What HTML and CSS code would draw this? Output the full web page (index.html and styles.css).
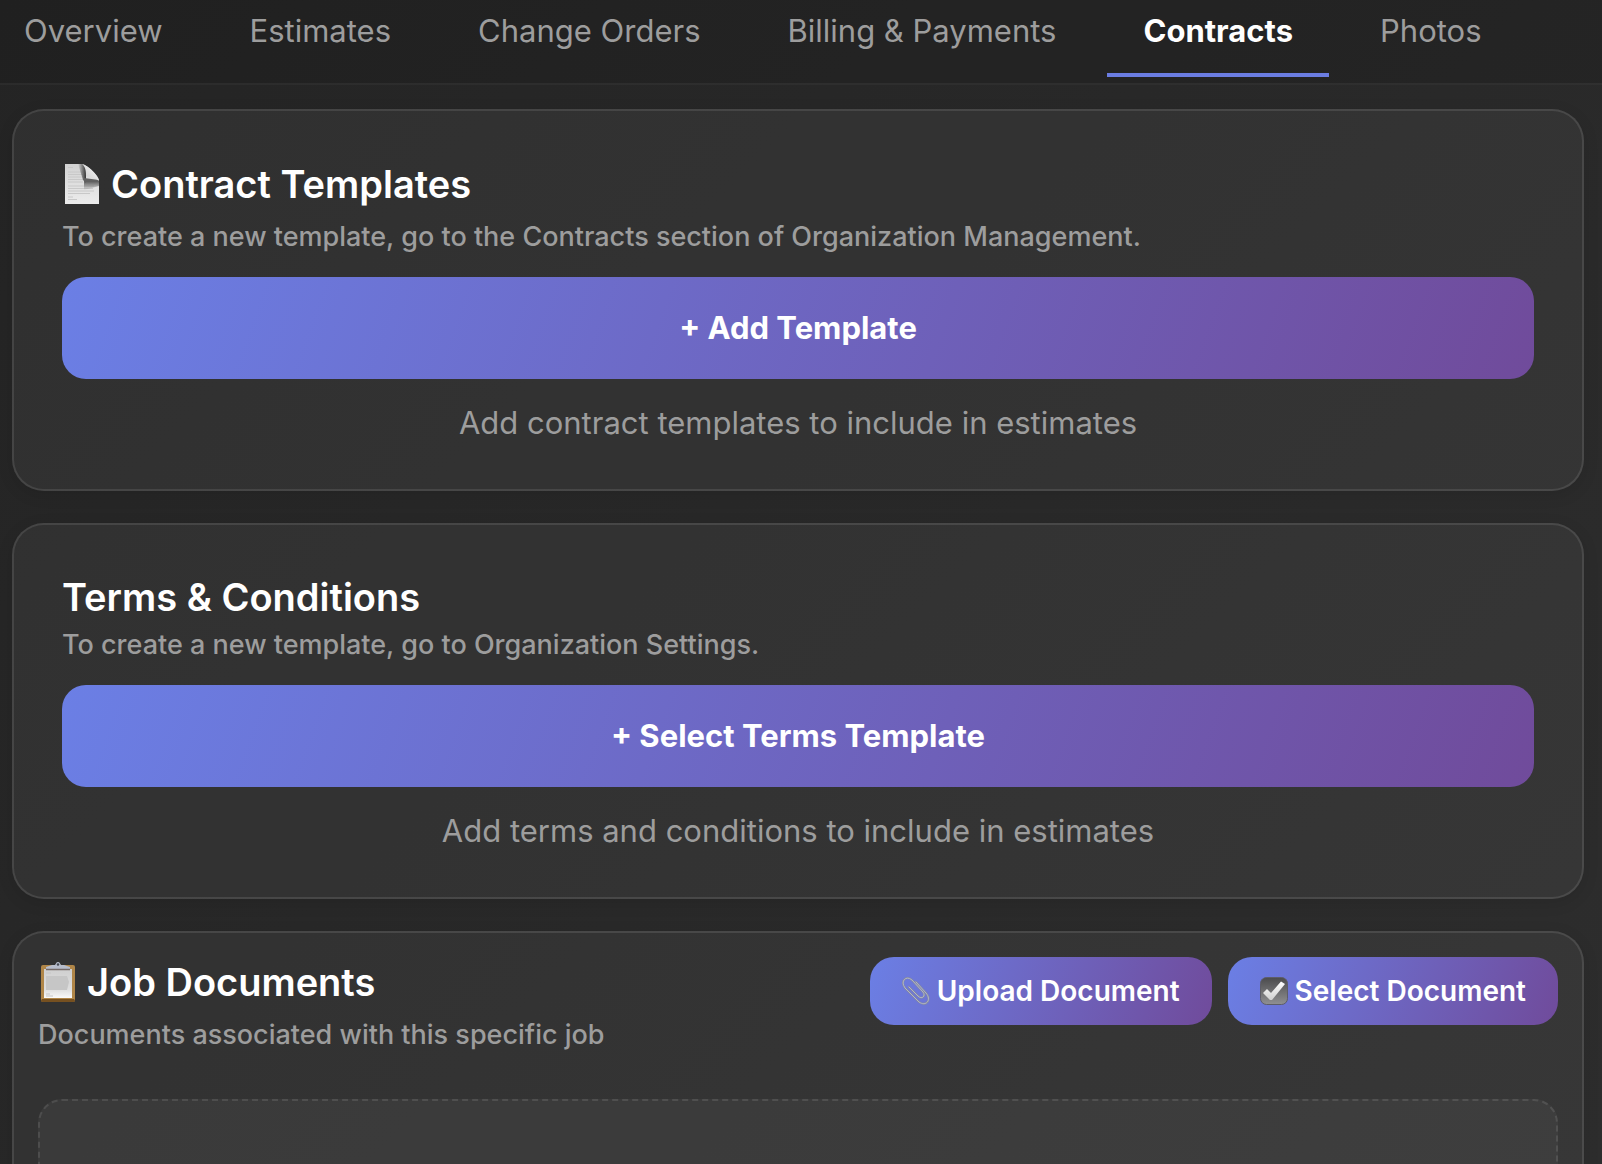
FILE: index.html
```html
<!DOCTYPE html>
<html lang="en">
<head>
<meta charset="utf-8">
<meta name="viewport" content="width=device-width, initial-scale=1">
<title>Contracts</title>
<link rel="stylesheet" href="styles.css">
</head>
<body>
<nav class="tabs" aria-label="Job sections">
  <a class="tab" href="#overview">Overview</a>
  <a class="tab" href="#estimates">Estimates</a>
  <a class="tab" href="#change-orders">Change Orders</a>
  <a class="tab" href="#billing">Billing &amp; Payments</a>
  <a class="tab tab-active" href="#contracts" aria-current="page">Contracts</a>
  <a class="tab" href="#photos">Photos</a>
</nav>
<main class="content">
  <section class="card">
    <h2 class="title title-icon">
      <svg class="icon-lg" viewBox="0 0 40 40" aria-hidden="true">
        <defs>
          <linearGradient id="sheet" x1="0" y1="0" x2="0" y2="1"><stop offset="0" stop-color="#d2d2d2"/><stop offset="1" stop-color="#ececec"/></linearGradient>
          <linearGradient id="fold" x1="1" y1="0" x2="0" y2="1"><stop offset="0" stop-color="#ffffff"/><stop offset="1" stop-color="#c4c4c4"/></linearGradient>
          <linearGradient id="shade" x1="0" y1="0" x2="0" y2="1"><stop offset="0.300" stop-color="#606060"/><stop offset="1" stop-color="#606060" stop-opacity="0"/></linearGradient>
          <linearGradient id="edge" x1="1" y1="0" x2="0" y2="0"><stop offset="0" stop-color="#333333"/><stop offset="1" stop-color="#333333" stop-opacity="0"/></linearGradient>
        </defs>
        <path d="M3 0H20C25 1 36 11 37 16V40H3Z" fill="url(#sheet)"/>
        <path d="M6 3.500h5M6 8h15M6 10.500h15M6 13h14M6 15.500h15M6 18h15M6 22h26M6 24.500h25M6 27h26M6 29.500h22M6 33h5M6 35.500h9" stroke="#c8c8c8" fill="none"/>
        <path d="M16 0H21L24 3V19L21 16Z" fill="url(#edge)"/>
        <path d="M22 14L37 16V22L22 26Z" fill="url(#shade)"/>
        <path d="M20 0C24 3 24 9 24 12C29 13 34 14 37 17C36 11 26 1 20 0Z" fill="url(#fold)"/>
      </svg>
      Contract Templates
    </h2>
    <p class="subtitle">To create a new template, go to the Contracts section of Organization Management.</p>
    <button class="btn btn-wide" type="button">+ Add Template</button>
    <p class="hint">Add contract templates to include in estimates</p>
  </section>

  <section class="card">
    <h2 class="title">Terms &amp; Conditions</h2>
    <p class="subtitle">To create a new template, go to Organization Settings.</p>
    <button class="btn btn-wide" type="button">+ Select Terms Template</button>
    <p class="hint">Add terms and conditions to include in estimates</p>
  </section>

  <section class="card card-compact">
    <header class="card-header">
      <div>
        <h2 class="title title-icon">
          <svg class="icon-lg" viewBox="0 0 40 40" aria-hidden="true">
            <defs>
              <linearGradient id="paper" x1="0" y1="0" x2="0" y2="1"><stop offset="0" stop-color="#cfcfcf"/><stop offset="0.700" stop-color="#dedede"/><stop offset="1" stop-color="#fafafa"/></linearGradient>
            </defs>
            <rect x="3" y="3" width="34" height="37" rx="2" fill="#b08648"/>
            <path d="M4 37h32l1 1.500q0 1.500-2 1.500H5q-2 0-2-1.500Z" fill="#765020"/>
            <rect x="6" y="7" width="28" height="29" fill="url(#paper)"/>
            <path d="M8 11h5M8 32h4M8 34h7" stroke="#c6c6c6"/>
            <path d="M8 14h21l2 6-2 8H8Z" fill="#c6c6c6"/>
            <path d="M8 5l6-2h3c1-1 1-3 3-3s2 2 3 3h3l6 2v2H8Z" fill="#b7bdcb"/>
            <path d="M8 7.500h24" stroke="#746a67" stroke-width="1.500"/>
            <circle cx="20" cy="2.500" r="1.200" fill="#444852"/>
          </svg>
          Job Documents
        </h2>
        <p class="subtitle">Documents associated with this specific job</p>
      </div>
      <div class="actions">
        <button class="btn btn-small" type="button">
          <svg class="icon-sm" viewBox="0 0 28 28" aria-hidden="true">
            <g fill="none" stroke-linecap="round" stroke-linejoin="round">
              <path d="M14 5L24 16C30 23 24 30 17 25L3 11C-2 4 4-2 10 3L21 15C24 19 20 23 16 19L7 10" stroke="#8388a4" stroke-width="2"/>
              <path d="M14 5L24 16C30 23 24 30 17 25L3 11C-2 4 4-2 10 3L21 15C24 19 20 23 16 19L7 10" stroke="#b0b5c6" stroke-width="1"/>
            </g>
          </svg>
          Upload Document
        </button>
        <button class="btn btn-small" type="button">
          <svg class="icon-sm" viewBox="0 0 28 28" aria-hidden="true">
            <defs>
              <linearGradient id="box" x1="0" y1="0" x2="0" y2="1"><stop offset="0" stop-color="#4b4b4d"/><stop offset="1" stop-color="#909092"/></linearGradient>
              <linearGradient id="tick" x1="0" y1="0" x2="0" y2="1"><stop offset="0" stop-color="#ffffff"/><stop offset="1" stop-color="#d0d0d0"/></linearGradient>
            </defs>
            <rect x="0.500" y="0.500" width="27" height="27" rx="6" fill="url(#box)" stroke="#5d5d68"/>
            <path d="M3 16L7 12L11 16L21 4.500L25 7L12 23H10Z" fill="url(#tick)"/>
          </svg>
          Select Document
        </button>
      </div>
    </header>
    <div class="dropzone"></div>
  </section>
</main>
</body>
</html>
```
FILE: styles.css
```css
* {
  box-sizing: border-box;
}

body {
  display: flex;
  flex-direction: column;
  margin: 0;
  height: 100vh;
  overflow: hidden;
  background: linear-gradient(135deg, #242424, #2d2d2d);
  color: #ffffff;
  font-family: Inter, "Liberation Sans", sans-serif;
}

.tabs {
  display: flex;
  flex-shrink: 0;
  gap: 15px;
  margin-left: -12px;
  padding: 11px 0 6px;
  background: rgba(0, 0, 0, 0.1);
  border-bottom: 2px solid rgba(255, 255, 255, 0.05);
}

.tab {
  padding: 0 36px 22px;
  border-bottom: 4px solid transparent;
  color: #9d9d9d;
  font-size: 31px;
  line-height: 40px;
  text-decoration: none;
  white-space: nowrap;
}

.tab-active {
  border-color: #6b7de2;
  color: #ffffff;
  font-weight: 700;
}

.content {
  display: flex;
  flex: 1;
  flex-direction: column;
  gap: 32px;
  min-height: 0;
  padding: 24px 18px 32px 12px;
  overflow-y: auto;
  scrollbar-width: none;
}

.card {
  flex-shrink: 0;
  padding: 48px;
  border: 2px solid rgba(255, 255, 255, 0.1);
  border-radius: 32px;
  background: rgba(255, 255, 255, 0.05);
  box-shadow: 0 4px 16px rgba(0, 0, 0, 0.1);
}

.card-compact {
  padding: 24px;
}

.card-header {
  display: flex;
  justify-content: space-between;
  align-items: flex-start;
  margin-bottom: 48px;
}

.title {
  margin: 0 0 8px;
  font-size: 38px;
  font-weight: 600;
  line-height: 48px;
}

.title-icon {
  display: flex;
  align-items: center;
  gap: 9px;
  margin-bottom: 12px;
  line-height: 50px;
}

.icon-lg {
  width: 40px;
  height: 40px;
}

.subtitle {
  margin: 0;
  color: #9d9d9d;
  font-size: 27px;
  font-weight: 500;
  line-height: 32px;
}

.btn {
  border: 0;
  border-radius: 24px;
  background: linear-gradient(110deg, #6b7fe5, #704b9b);
  color: #ffffff;
  font-family: inherit;
  font-weight: 600;
}

.btn-wide {
  display: block;
  width: 100%;
  margin-top: 24px;
  padding: 31px 32px;
  font-size: 31px;
  font-weight: 700;
  line-height: 40px;
}

.actions {
  display: flex;
  gap: 16px;
}

.btn-small {
  display: flex;
  align-items: center;
  gap: 7px;
  padding: 18px 32px;
  font-size: 28px;
  line-height: 32px;
}

.icon-sm {
  width: 28px;
  height: 28px;
}

.hint {
  margin: 26px 0 0;
  color: #9d9d9d;
  font-size: 31px;
  line-height: 36px;
  text-align: center;
}

.dropzone {
  min-height: 240px;
  border: 2px dashed rgba(255, 255, 255, 0.1);
  border-radius: 24px;
  background: rgba(255, 255, 255, 0.04);
}
```
